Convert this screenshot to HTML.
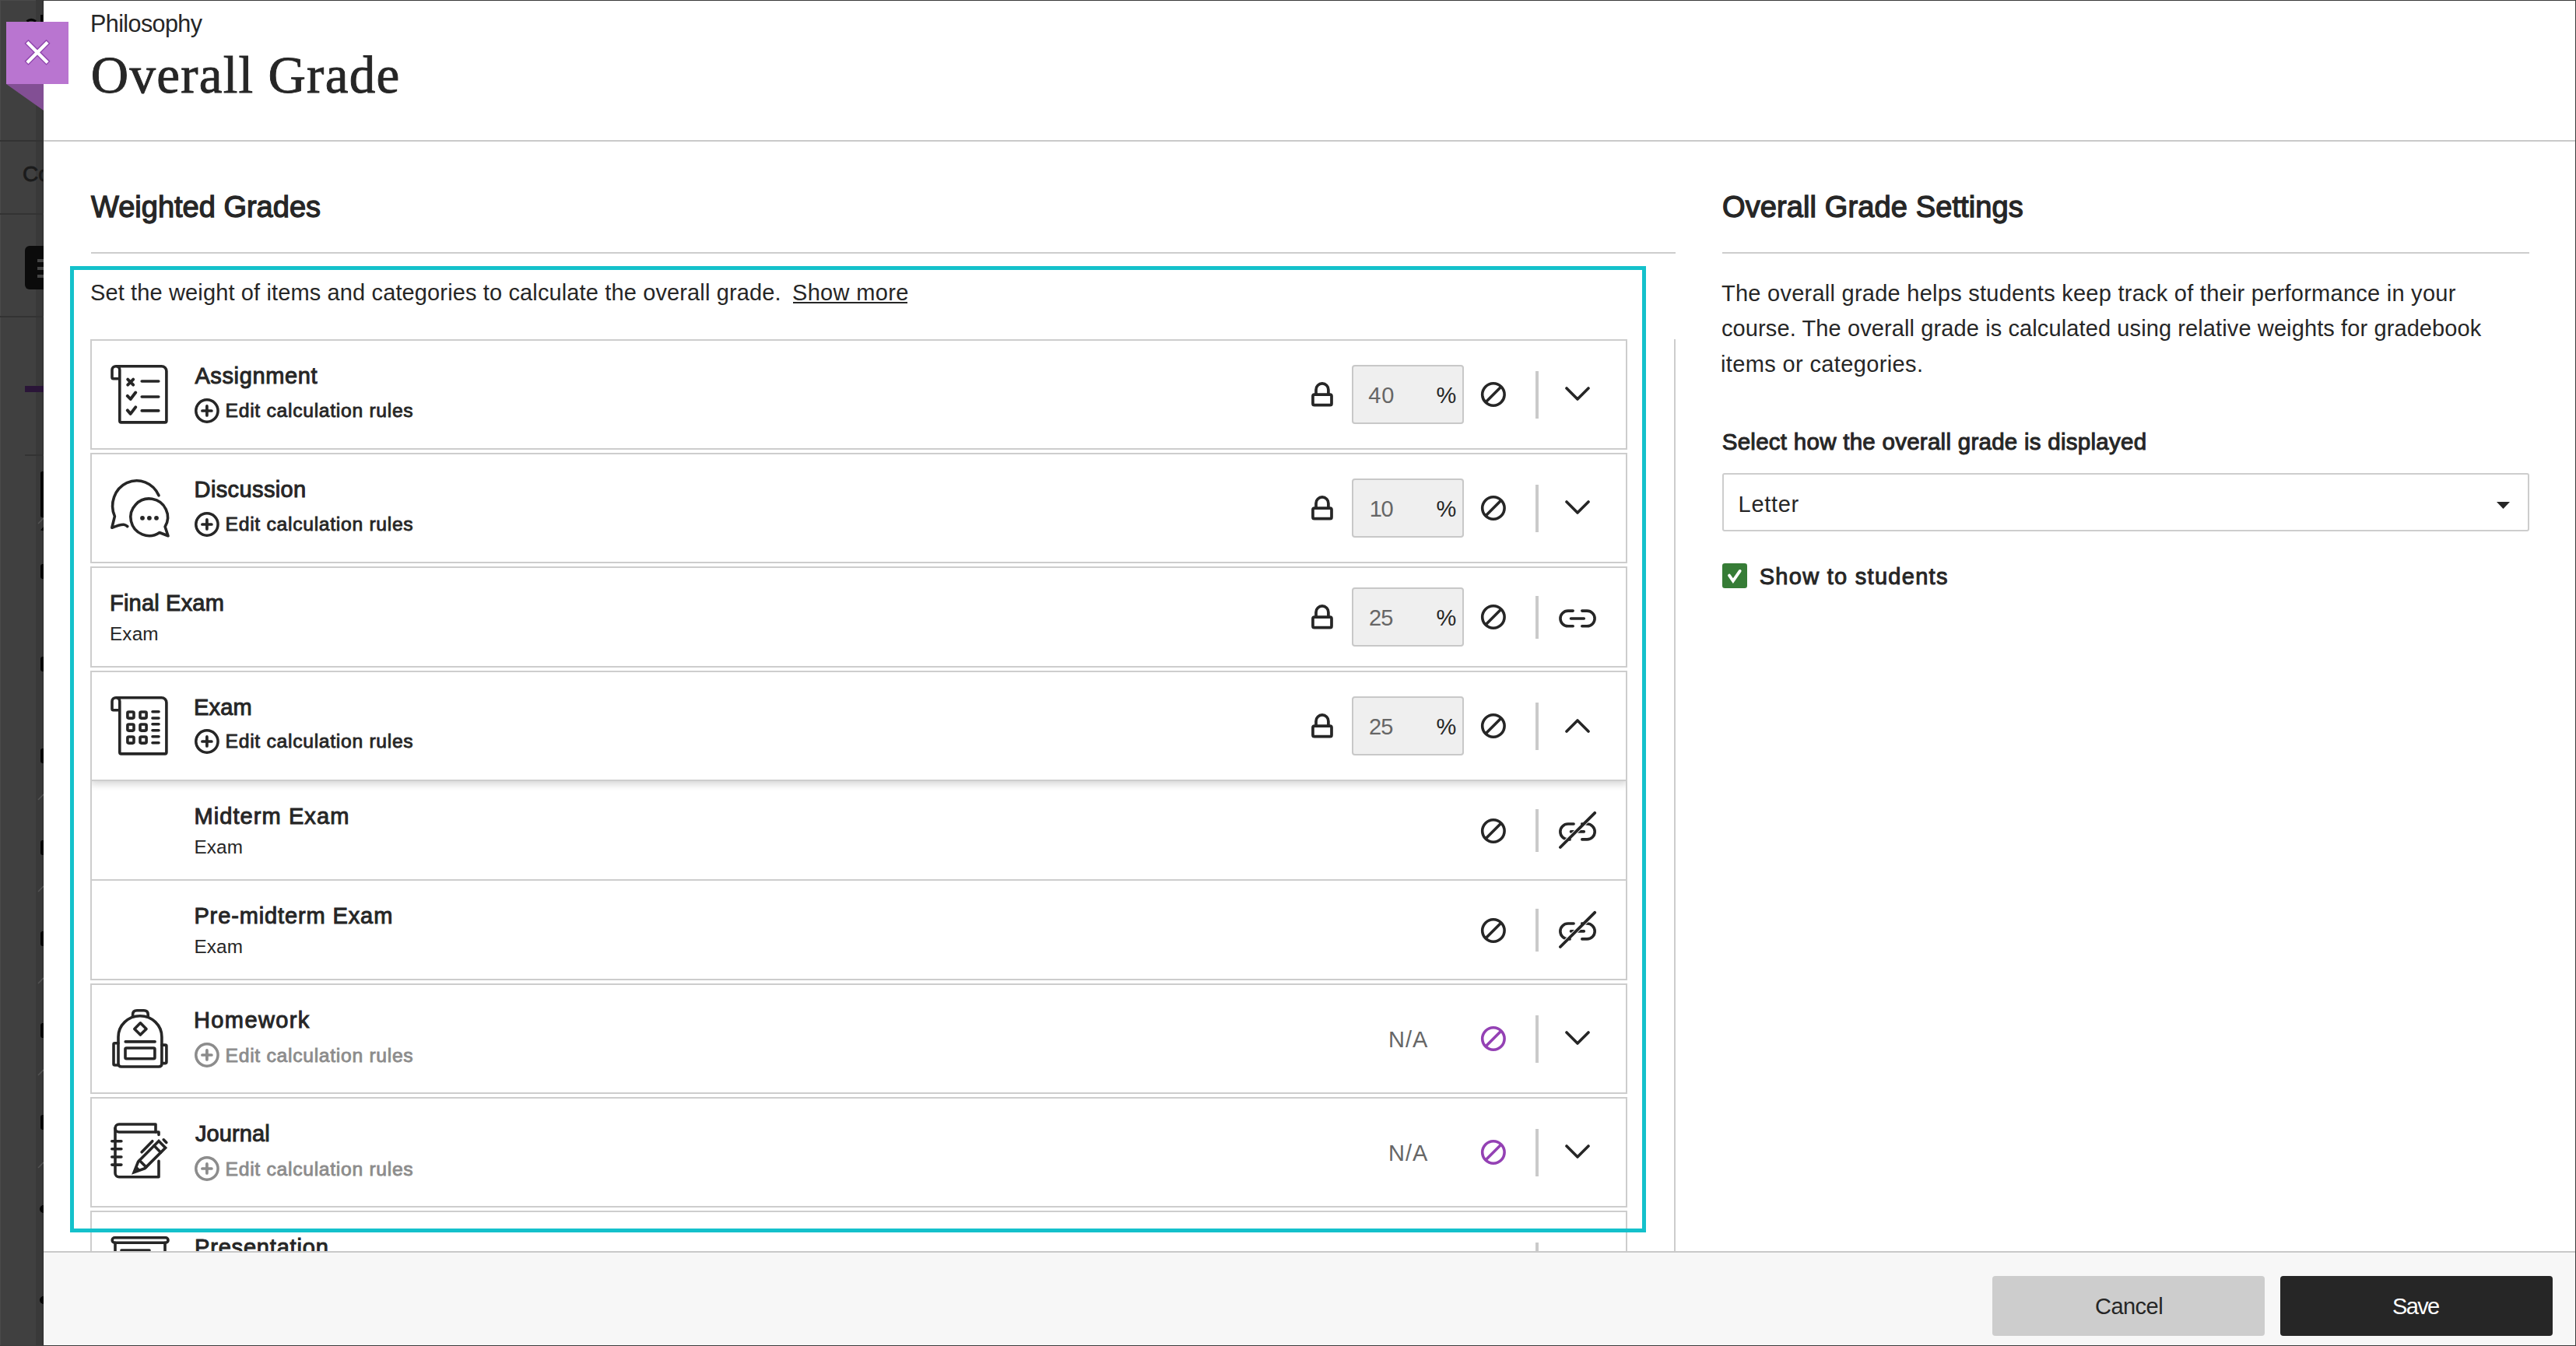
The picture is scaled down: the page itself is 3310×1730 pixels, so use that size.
<!DOCTYPE html>
<html><head><meta charset='utf-8'><title>Overall Grade</title>
<style>html,body{margin:0;padding:0;width:3310px;height:1730px;overflow:hidden;background:#404040;}
body{position:relative;font-family:"Liberation Sans",sans-serif;}</style></head><body>
<div style='position:absolute;left:0px;top:0px;width:56px;height:1730px;background:#404040'></div>
<div style='position:absolute;left:0px;top:0px;width:1px;height:1730px;background:#4a4a4a'></div>
<div style='position:absolute;left:0px;top:0px;width:56px;height:1px;background:#4a4a4a'></div>
<div style='position:absolute;left:46px;top:0px;width:10px;height:1730px;background:#393939'></div>
<div style='position:absolute;left:55px;top:0px;width:1px;height:1730px;background:#2a2a2a'></div>
<div style='position:absolute;left:0px;top:180px;width:56px;height:2px;background:#333'></div>
<div style='position:absolute;left:0px;top:274px;width:56px;height:2px;background:#333'></div>
<div style='position:absolute;left:0px;top:406px;width:56px;height:2px;background:#333'></div>
<div style='position:absolute;left:32px;top:584px;width:24px;height:2px;background:#333'></div>
<div style='position:absolute;left:29px;top:210px;font-family:"Liberation Sans";font-size:28px;line-height:28px;color:#1b1b1b;white-space:nowrap;-webkit-text-stroke:0.8px #1b1b1b'>Co</div>
<div style='position:absolute;left:32px;top:316px;width:40px;height:56px;background:#0b0b0b;border-radius:6px'></div>
<div style='position:absolute;left:48px;top:333px;width:8px;height:4px;background:#444'></div>
<div style='position:absolute;left:48px;top:343px;width:8px;height:4px;background:#444'></div>
<div style='position:absolute;left:48px;top:353px;width:8px;height:4px;background:#444'></div>
<div style='position:absolute;left:32px;top:496px;width:24px;height:8px;background:#2a1538'></div>
<div style='position:absolute;left:52px;top:606px;width:6px;height:59px;background:#050505;border-radius:2px'></div>
<svg style='position:absolute;left:48px;top:660px;' width='8' height='24' viewBox='0 0 8 24'><polygon points='4,21.5 8,17 8,22' fill='#050505'/><path d='M1,13 L8,6' stroke='#555' stroke-width='1.5'/></svg>
<div style='position:absolute;left:52px;top:725px;width:6px;height:19px;background:#050505;border-radius:3px'></div>
<div style='position:absolute;left:52px;top:844px;width:6px;height:19px;background:#050505;border-radius:3px'></div>
<div style='position:absolute;left:52px;top:962px;width:6px;height:19px;background:#050505;border-radius:3px'></div>
<div style='position:absolute;left:52px;top:1080px;width:6px;height:19px;background:#050505;border-radius:3px'></div>
<div style='position:absolute;left:52px;top:1197px;width:6px;height:19px;background:#050505;border-radius:3px'></div>
<div style='position:absolute;left:52px;top:1315px;width:6px;height:19px;background:#050505;border-radius:3px'></div>
<div style='position:absolute;left:52px;top:1433px;width:6px;height:19px;background:#050505;border-radius:3px'></div>
<div style='position:absolute;left:51px;top:1549px;width:10px;height:10px;background:#050505;border-radius:5px'></div>
<div style='position:absolute;left:51px;top:1666px;width:10px;height:10px;background:#050505;border-radius:5px'></div>
<svg style='position:absolute;left:48px;top:1020px;' width='8' height='10' viewBox='0 0 8 10'><path d='M1,8 L8,1' stroke='#555' stroke-width='1.5'/></svg>
<svg style='position:absolute;left:48px;top:1138px;' width='8' height='10' viewBox='0 0 8 10'><path d='M1,8 L8,1' stroke='#555' stroke-width='1.5'/></svg>
<svg style='position:absolute;left:48px;top:1256px;' width='8' height='10' viewBox='0 0 8 10'><path d='M1,8 L8,1' stroke='#555' stroke-width='1.5'/></svg>
<svg style='position:absolute;left:48px;top:1374px;' width='8' height='10' viewBox='0 0 8 10'><path d='M1,8 L8,1' stroke='#555' stroke-width='1.5'/></svg>
<svg style='position:absolute;left:48px;top:1493px;' width='8' height='10' viewBox='0 0 8 10'><path d='M1,8 L8,1' stroke='#555' stroke-width='1.5'/></svg>
<svg style='position:absolute;left:30px;top:14px;' width='26' height='14' viewBox='0 0 26 14'><path d='M4.5,13.5 Q10,9 16,13.5' fill='none' stroke='#050505' stroke-width='3'/><rect x='22' y='5' width='3' height='9' fill='#050505'/></svg>
<div style='position:absolute;left:56px;top:1px;width:3253px;height:1728px;background:#fff'></div>
<div style='position:absolute;left:3309px;top:0px;width:1px;height:1730px;background:#3c3c3c'></div>
<div style='position:absolute;left:56px;top:0px;width:3254px;height:1px;background:#3a3a3a'></div>
<div style='position:absolute;left:0px;top:1729px;width:3310px;height:1px;background:#3c3c3c'></div>
<div style='position:absolute;left:8px;top:28px;width:80px;height:80px;background:#b975d0'></div>
<svg style='position:absolute;left:8px;top:108px;' width='48' height='34' viewBox='0 0 48 34'><polygon points='0,0 48,0 48,34' fill='#824f94'/></svg>
<svg style='position:absolute;left:8px;top:28px;' width='80' height='80' viewBox='0 0 80 80'><g stroke-linecap='butt' fill='none'><path d='M26,25.3 L54,53.3 M54,25.3 L26,53.3' stroke='#8e44ad' stroke-width='7'/><path d='M26.9,26.2 L53.1,52.4 M53.1,26.2 L26.9,52.4' stroke='#fff' stroke-width='4.3'/></g></svg>
<div style='position:absolute;left:56px;top:180px;width:3253px;height:2px;background:#c9c9c9'></div>
<div style='position:absolute;left:117px;top:324px;width:2036px;height:2px;background:#cdcdcd'></div>
<div style='position:absolute;left:2213px;top:324px;width:1037px;height:2px;background:#cdcdcd'></div>
<div style='position:absolute;left:90px;top:342px;width:2025px;height:1242px;box-sizing:border-box;border:5px solid #14c1cb;z-index:5'></div>
<div style='position:absolute;left:1019px;top:388px;width:147px;height:2px;background:#262626'></div>
<div style='position:absolute;left:2151px;top:436px;width:2px;height:1172px;background:#cdcdcd'></div>
<div style='position:absolute;left:116px;top:436px;width:1975px;height:142px;box-sizing:border-box;border:2px solid #cdcdcd;background:#fff'></div>
<svg style='position:absolute;left:136px;top:462px;' width='88' height='88' viewBox='0 0 88 88'><g fill='none' stroke='#262626' stroke-width='3.6' stroke-linecap='round' stroke-linejoin='round'><path d='M17.8,24.7 L9.7,24.7 Q8,24.7 8,23 L8,13.6 A4.9,4.9 0 0 1 17.8,13.6 L17.8,79 Q17.8,80.9 19.7,80.9 L76,80.9 Q77.9,80.9 77.9,79 L77.9,15.1 A6.4,6.4 0 0 0 71.5,8.7 L12.9,8.7'/><path d='M28.2,25.6 L35.2,32.6 M35.2,25.6 L28.2,32.6' stroke-width='3.9'/><path d='M46.2,28 H67.8 M46.2,48 H67.8 M46.2,65.9 H67.8'/><path d='M27.8,46.9 L31.7,51 L38.2,42.5 M27.8,65.4 L31.7,69.9 L38.2,61.4' stroke-width='3.9'/></g></svg>
<svg style='position:absolute;left:248px;top:509.9px;' width='36' height='36' viewBox='0 0 36 36'><g fill='none' stroke='#262626' stroke-width='3.5' stroke-linecap='round'><circle cx='17.9' cy='18' r='14.15'/><path d='M11.9,18 H23.9 M17.9,11.9 V24' stroke-width='3.7'/></g></svg>
<svg style='position:absolute;left:1676px;top:480px;' width='50' height='50' viewBox='0 0 50 50'><g fill='none' stroke='#262626' stroke-width='3.7' stroke-linejoin='round'><rect x='10.95' y='27.1' width='24.05' height='13.6' rx='2'/><path d='M15,27.1 L15,20.9 A7.95,7.95 0 0 1 30.9,20.9 L30.9,27.1'/></g></svg>
<div style='position:absolute;left:1737px;top:469px;width:144px;height:76px;box-sizing:border-box;background:#efefef;border:2px solid #c8c8c8;border-radius:4px'></div>
<svg style='position:absolute;left:1899px;top:487px;' width='40' height='40' viewBox='0 0 40 40'><g fill='none' stroke='#262626' stroke-width='3.6'><circle cx='19.9' cy='20' r='14.2'/><path d='M9.9,30 L29.9,10'/></g></svg>
<div style='position:absolute;left:1973px;top:477px;width:4px;height:61px;background:#cacaca'></div>
<svg style='position:absolute;left:2007px;top:487px;' width='40' height='40' viewBox='0 0 40 40'><path d='M6,12 L20,26 L34,12' fill='none' stroke='#262626' stroke-width='3.6' stroke-linecap='round' stroke-linejoin='round'/></svg>
<div style='position:absolute;left:116px;top:582px;width:1975px;height:142px;box-sizing:border-box;border:2px solid #cdcdcd;background:#fff'></div>
<svg style='position:absolute;left:136px;top:608px;' width='88' height='88' viewBox='0 0 88 88'><g fill='none' stroke='#262626' stroke-width='3.6' stroke-linecap='round' stroke-linejoin='round'><path d='M68,28.8 A31,32.3 0 1 0 11.4,55.6 L7.8,70.3 Q18,66 23,66.2 Q25.5,66.5 27.8,68.6'/><path d='M69,76.5 A23.8,23.8 0 1 1 76.1,69 L80,80.7 Z'/></g><g fill='#262626'><circle cx='47' cy='57.8' r='2.9'/><circle cx='55.9' cy='57.8' r='2.9'/><circle cx='65' cy='57.8' r='2.9'/></g></svg>
<svg style='position:absolute;left:248px;top:655.9px;' width='36' height='36' viewBox='0 0 36 36'><g fill='none' stroke='#262626' stroke-width='3.5' stroke-linecap='round'><circle cx='17.9' cy='18' r='14.15'/><path d='M11.9,18 H23.9 M17.9,11.9 V24' stroke-width='3.7'/></g></svg>
<svg style='position:absolute;left:1676px;top:626px;' width='50' height='50' viewBox='0 0 50 50'><g fill='none' stroke='#262626' stroke-width='3.7' stroke-linejoin='round'><rect x='10.95' y='27.1' width='24.05' height='13.6' rx='2'/><path d='M15,27.1 L15,20.9 A7.95,7.95 0 0 1 30.9,20.9 L30.9,27.1'/></g></svg>
<div style='position:absolute;left:1737px;top:615px;width:144px;height:76px;box-sizing:border-box;background:#efefef;border:2px solid #c8c8c8;border-radius:4px'></div>
<svg style='position:absolute;left:1899px;top:633px;' width='40' height='40' viewBox='0 0 40 40'><g fill='none' stroke='#262626' stroke-width='3.6'><circle cx='19.9' cy='20' r='14.2'/><path d='M9.9,30 L29.9,10'/></g></svg>
<div style='position:absolute;left:1973px;top:623px;width:4px;height:61px;background:#cacaca'></div>
<svg style='position:absolute;left:2007px;top:633px;' width='40' height='40' viewBox='0 0 40 40'><path d='M6,12 L20,26 L34,12' fill='none' stroke='#262626' stroke-width='3.6' stroke-linecap='round' stroke-linejoin='round'/></svg>
<div style='position:absolute;left:116px;top:728px;width:1975px;height:130px;box-sizing:border-box;border:2px solid #cdcdcd;background:#fff'></div>
<svg style='position:absolute;left:1676px;top:766px;' width='50' height='50' viewBox='0 0 50 50'><g fill='none' stroke='#262626' stroke-width='3.7' stroke-linejoin='round'><rect x='10.95' y='27.1' width='24.05' height='13.6' rx='2'/><path d='M15,27.1 L15,20.9 A7.95,7.95 0 0 1 30.9,20.9 L30.9,27.1'/></g></svg>
<div style='position:absolute;left:1737px;top:755px;width:144px;height:76px;box-sizing:border-box;background:#efefef;border:2px solid #c8c8c8;border-radius:4px'></div>
<svg style='position:absolute;left:1899px;top:773px;' width='40' height='40' viewBox='0 0 40 40'><g fill='none' stroke='#262626' stroke-width='3.6'><circle cx='19.9' cy='20' r='14.2'/><path d='M9.9,30 L29.9,10'/></g></svg>
<div style='position:absolute;left:1973px;top:766px;width:4px;height:55px;background:#cacaca'></div>
<svg style='position:absolute;left:1990px;top:770px;' width='70' height='50' viewBox='0 0 70 50'><g fill='none' stroke='#262626' stroke-width='3.6' stroke-linecap='round'><path d='M31.2,15.1 L24.8,15.1 A9.85,9.85 0 0 0 24.8,34.8 L31.2,34.8'/><path d='M42.8,15.1 L49.25,15.1 A9.85,9.85 0 0 1 49.25,34.8 L42.8,34.8'/><path d='M28.5,25 H45.3'/></g></svg>
<div style='position:absolute;left:116px;top:862px;width:1975px;height:398px;box-sizing:border-box;border:2px solid #cdcdcd;background:#fff'></div>
<div style='position:absolute;left:118px;top:1004px;width:1971px;height:254px;background:#fff'></div>
<div style='position:absolute;left:116px;top:862px;width:1975px;height:398px;overflow:hidden'><div style='position:absolute;left:0;top:0;width:1975px;height:142px;box-sizing:border-box;border:2px solid #cdcdcd;background:#fff;box-shadow:0 4px 9px rgba(0,0,0,0.17)'></div><div style='position:absolute;left:0;top:268px;width:1975px;height:2px;background:#cdcdcd'></div><div style='position:absolute;left:0;top:0;width:2px;height:398px;background:#cdcdcd'></div><div style='position:absolute;right:0;top:0;width:2px;height:398px;background:#cdcdcd'></div><div style='position:absolute;left:0;bottom:0;width:1975px;height:2px;background:#cdcdcd'></div></div>
<svg style='position:absolute;left:136px;top:888px;' width='88' height='88' viewBox='0 0 88 88'><g fill='none' stroke='#262626' stroke-width='3.6' stroke-linecap='round' stroke-linejoin='round'><path d='M17.8,24.7 L9.7,24.7 Q8,24.7 8,23 L8,13.6 A4.9,4.9 0 0 1 17.8,13.6 L17.8,79 Q17.8,80.9 19.7,80.9 L76,80.9 Q77.9,80.9 77.9,79 L77.9,15.1 A6.4,6.4 0 0 0 71.5,8.7 L12.9,8.7'/><rect x='27.9' y='27' width='8.1' height='8.1' rx='1.5'/><rect x='27.9' y='43' width='8.1' height='8.1' rx='1.5'/><rect x='27.9' y='59' width='8.1' height='8.1' rx='1.5'/><rect x='44' y='27' width='8.1' height='8.1' rx='1.5'/><rect x='44' y='43' width='8.1' height='8.1' rx='1.5'/><rect x='44' y='59' width='8.1' height='8.1' rx='1.5'/><path d='M60,26.8 H68 M60,35 H68 M60,42.8 H68 M60,50.8 H68 M60,58.8 H68 M60,66.8 H68'/></g></svg>
<svg style='position:absolute;left:248px;top:934.9px;' width='36' height='36' viewBox='0 0 36 36'><g fill='none' stroke='#262626' stroke-width='3.5' stroke-linecap='round'><circle cx='17.9' cy='18' r='14.15'/><path d='M11.9,18 H23.9 M17.9,11.9 V24' stroke-width='3.7'/></g></svg>
<svg style='position:absolute;left:1676px;top:906px;' width='50' height='50' viewBox='0 0 50 50'><g fill='none' stroke='#262626' stroke-width='3.7' stroke-linejoin='round'><rect x='10.95' y='27.1' width='24.05' height='13.6' rx='2'/><path d='M15,27.1 L15,20.9 A7.95,7.95 0 0 1 30.9,20.9 L30.9,27.1'/></g></svg>
<div style='position:absolute;left:1737px;top:895px;width:144px;height:76px;box-sizing:border-box;background:#efefef;border:2px solid #c8c8c8;border-radius:4px'></div>
<svg style='position:absolute;left:1899px;top:913px;' width='40' height='40' viewBox='0 0 40 40'><g fill='none' stroke='#262626' stroke-width='3.6'><circle cx='19.9' cy='20' r='14.2'/><path d='M9.9,30 L29.9,10'/></g></svg>
<div style='position:absolute;left:1973px;top:903px;width:4px;height:61px;background:#cacaca'></div>
<svg style='position:absolute;left:2007px;top:913px;' width='40' height='40' viewBox='0 0 40 40'><path d='M6,27 L20,13 L34,27' fill='none' stroke='#262626' stroke-width='3.6' stroke-linecap='round' stroke-linejoin='round'/></svg>
<svg style='position:absolute;left:1899px;top:1048px;' width='40' height='40' viewBox='0 0 40 40'><g fill='none' stroke='#262626' stroke-width='3.6'><circle cx='19.9' cy='20' r='14.2'/><path d='M9.9,30 L29.9,10'/></g></svg>
<div style='position:absolute;left:1973px;top:1040px;width:4px;height:55px;background:#cacaca'></div>
<svg style='position:absolute;left:1990px;top:1035px;' width='70' height='68' viewBox='0 0 70 68'><g fill='none' stroke-linecap='round'><g stroke='#262626' stroke-width='3.6'><path d='M32.1,24 L24.8,24 A9.95,9.95 0 0 0 24.8,43.9 L27,43.9'/><path d='M42.8,24 L49.25,24 A9.95,9.95 0 0 1 49.25,43.9 L42.8,43.9'/><path d='M28.5,33.9 H45.3'/></g><path d='M14.9,54 L59.2,9.8' stroke='#fff' stroke-width='5.6'/><path d='M42.8,24 L43.6,24 M26.2,43.9 L27,43.9' stroke='#262626' stroke-width='3.6'/><path d='M14.9,54 L59.2,9.8' stroke='#262626' stroke-width='3.8'/></g></svg>
<svg style='position:absolute;left:1899px;top:1176px;' width='40' height='40' viewBox='0 0 40 40'><g fill='none' stroke='#262626' stroke-width='3.6'><circle cx='19.9' cy='20' r='14.2'/><path d='M9.9,30 L29.9,10'/></g></svg>
<div style='position:absolute;left:1973px;top:1168px;width:4px;height:55px;background:#cacaca'></div>
<svg style='position:absolute;left:1990px;top:1163px;' width='70' height='68' viewBox='0 0 70 68'><g fill='none' stroke-linecap='round'><g stroke='#262626' stroke-width='3.6'><path d='M32.1,24 L24.8,24 A9.95,9.95 0 0 0 24.8,43.9 L27,43.9'/><path d='M42.8,24 L49.25,24 A9.95,9.95 0 0 1 49.25,43.9 L42.8,43.9'/><path d='M28.5,33.9 H45.3'/></g><path d='M14.9,54 L59.2,9.8' stroke='#fff' stroke-width='5.6'/><path d='M42.8,24 L43.6,24 M26.2,43.9 L27,43.9' stroke='#262626' stroke-width='3.6'/><path d='M14.9,54 L59.2,9.8' stroke='#262626' stroke-width='3.8'/></g></svg>
<div style='position:absolute;left:116px;top:1264px;width:1975px;height:142px;box-sizing:border-box;border:2px solid #cdcdcd;background:#fff'></div>
<svg style='position:absolute;left:136px;top:1290px;' width='88' height='88' viewBox='0 0 88 88'><g fill='none' stroke='#262626' stroke-width='3.6' stroke-linecap='round' stroke-linejoin='round'><path d='M16,42.8 A27.95,27.1 0 0 1 71.9,42.8 L71.9,77 Q71.9,81 67.9,81 L20,81 Q16,81 16,77 Z'/><path d='M34.6,16.5 L34.6,14 Q34.6,8.8 40,8.8 L48.8,8.8 Q54.2,8.8 54.2,14 L54.2,16.5'/><path d='M44.4,24.8 L52,32.4 L44.4,40 L36.8,32.4 Z'/><path d='M25.2,48.9 H63.1'/><rect x='25' y='57' width='37.9' height='13.7' rx='1.5'/><path d='M16,50.8 L11.5,50.8 Q10,50.8 10,52.3 L10,77.5 Q10,79 11.5,79 L16,79'/><path d='M71.9,53.1 L76.4,53.1 Q77.9,53.1 77.9,54.6 L77.9,75.1 Q77.9,76.6 76.4,76.6 L71.9,76.6'/></g></svg>
<svg style='position:absolute;left:248px;top:1337.9px;' width='36' height='36' viewBox='0 0 36 36'><g fill='none' stroke='#8c8c8c' stroke-width='3.5' stroke-linecap='round'><circle cx='17.9' cy='18' r='14.15'/><path d='M11.9,18 H23.9 M17.9,11.9 V24' stroke-width='3.7'/></g></svg>
<svg style='position:absolute;left:1899px;top:1315px;' width='40' height='40' viewBox='0 0 40 40'><g fill='none' stroke='#9441b4' stroke-width='3.6'><circle cx='19.9' cy='20' r='14.2'/><path d='M9.9,30 L29.9,10'/></g></svg>
<div style='position:absolute;left:1973px;top:1305px;width:4px;height:61px;background:#cacaca'></div>
<svg style='position:absolute;left:2007px;top:1315px;' width='40' height='40' viewBox='0 0 40 40'><path d='M6,12 L20,26 L34,12' fill='none' stroke='#262626' stroke-width='3.6' stroke-linecap='round' stroke-linejoin='round'/></svg>
<div style='position:absolute;left:116px;top:1410px;width:1975px;height:142px;box-sizing:border-box;border:2px solid #cdcdcd;background:#fff'></div>
<svg style='position:absolute;left:136px;top:1436px;' width='88' height='88' viewBox='0 0 88 88'><g fill='none' stroke='#262626' stroke-width='3.6' stroke-linecap='round' stroke-linejoin='round'><path d='M68,56.2 L68,76.8 L17,76.8 A5,5 0 0 1 12,71.8 L12,14 A5,5 0 0 1 17,9 L64,9 L64,19'/><path d='M68,22.5 L68,19 L17,19 A5,5 0 0 1 12,14'/><path d='M7.8,30.7 H19.9 M7.8,40.8 H19.9 M7.8,51 H19.9 M7.8,61.1 H19.9'/><path d='M36.2,70.6 L41.6,57 L68,30.6 L76.6,39.2 L50.2,65.6 Z' stroke-linejoin='miter'/><path d='M62,36.6 L70.6,45.2 M43.2,55.4 L51.8,64'/><path d='M46.1,44.8 L59.8,30.7 M74.2,28.8 L77.8,32.4'/></g><path d='M36.5,70.3 L39.5,62.5 L44.5,67.5 Z' fill='#262626'/></svg>
<svg style='position:absolute;left:248px;top:1483.9px;' width='36' height='36' viewBox='0 0 36 36'><g fill='none' stroke='#8c8c8c' stroke-width='3.5' stroke-linecap='round'><circle cx='17.9' cy='18' r='14.15'/><path d='M11.9,18 H23.9 M17.9,11.9 V24' stroke-width='3.7'/></g></svg>
<svg style='position:absolute;left:1899px;top:1461px;' width='40' height='40' viewBox='0 0 40 40'><g fill='none' stroke='#9441b4' stroke-width='3.6'><circle cx='19.9' cy='20' r='14.2'/><path d='M9.9,30 L29.9,10'/></g></svg>
<div style='position:absolute;left:1973px;top:1451px;width:4px;height:61px;background:#cacaca'></div>
<svg style='position:absolute;left:2007px;top:1461px;' width='40' height='40' viewBox='0 0 40 40'><path d='M6,12 L20,26 L34,12' fill='none' stroke='#262626' stroke-width='3.6' stroke-linecap='round' stroke-linejoin='round'/></svg>
<div style='position:absolute;left:116px;top:1556px;width:1975px;height:142px;box-sizing:border-box;border:2px solid #cdcdcd;background:#fff'></div>
<svg style='position:absolute;left:136px;top:1582px;' width='88' height='88' viewBox='0 0 88 88'><g fill='none' stroke='#262626' stroke-width='3.6' stroke-linecap='round' stroke-linejoin='round'><rect x='8.2' y='8.8' width='71.8' height='6.4' rx='3.2'/><path d='M12,15.2 V40 M76,15.2 V40 M20,25 H56'/></g></svg>
<div style='position:absolute;left:1973px;top:1597px;width:4px;height:61px;background:#cacaca'></div>
<div style='position:absolute;left:2213px;top:608px;width:1037px;height:75px;box-sizing:border-box;border:2px solid #cdcdcd;border-radius:3px;background:#fff'></div>
<svg style='position:absolute;left:3200px;top:640px;' width='32' height='20' viewBox='0 0 32 20'><polygon points='8,5 25,5 16.5,14' fill='#262626'/></svg>
<svg style='position:absolute;left:2213px;top:724px;' width='32' height='32' viewBox='0 0 32 32'><rect x='0' y='0' width='32' height='32' rx='3.3' fill='#367c36'/><path d='M9,15.6 L13.9,22.6 L22.7,9.9' fill='none' stroke='#fff' stroke-width='3.8' stroke-linecap='round' stroke-linejoin='miter'/></svg>
<div style='position:absolute;left:116.00px;top:14.50px;font-family:"Liberation Sans";font-weight:400;font-size:30.5px;line-height:30.5px;letter-spacing:-0.589px;color:#262626;white-space:nowrap;'>Philosophy</div>
<div style='position:absolute;left:116.80px;top:63.00px;font-family:"Liberation Serif";font-weight:400;font-size:67px;line-height:67px;letter-spacing:1.250px;color:#262626;white-space:nowrap;-webkit-text-stroke:0.9px #262626;'>Overall Grade</div>
<div style='position:absolute;left:117.00px;top:247.00px;font-family:"Liberation Sans";font-weight:400;font-size:38px;line-height:38px;letter-spacing:0.000px;color:#262626;white-space:nowrap;-webkit-text-stroke:1.31px #262626;'>Weighted Grades</div>
<div style='position:absolute;left:2213.00px;top:246.50px;font-family:"Liberation Sans";font-weight:400;font-size:38px;line-height:38px;letter-spacing:0.114px;color:#262626;white-space:nowrap;-webkit-text-stroke:1.31px #262626;'>Overall Grade Settings</div>
<div style='position:absolute;left:116.00px;top:361.60px;font-family:"Liberation Sans";font-weight:400;font-size:29px;line-height:29px;letter-spacing:0.130px;color:#262626;white-space:nowrap;'>Set the weight of items and categories to calculate the overall grade.</div>
<div style='position:absolute;left:1018.00px;top:361.60px;font-family:"Liberation Sans";font-weight:400;font-size:29px;line-height:29px;letter-spacing:0.325px;color:#262626;white-space:nowrap;'>Show more</div>
<div style='position:absolute;left:250.40px;top:469.00px;font-family:"Liberation Sans";font-weight:400;font-size:29px;line-height:29px;letter-spacing:0.622px;color:#262626;white-space:nowrap;-webkit-text-stroke:1.00px #262626;'>Assignment</div>
<div style='position:absolute;left:289.60px;top:516.00px;font-family:"Liberation Sans";font-weight:400;font-size:24.7px;line-height:24.7px;letter-spacing:0.700px;color:#262626;white-space:nowrap;-webkit-text-stroke:0.85px #262626;'>Edit calculation rules</div>
<div style='position:absolute;left:1758.30px;top:494.00px;font-family:"Liberation Sans";font-weight:400;font-size:29px;line-height:29px;letter-spacing:0.700px;color:#666;white-space:nowrap;'>40</div>
<div style='position:absolute;left:1845.40px;top:494.00px;font-family:"Liberation Sans";font-weight:400;font-size:29px;line-height:29px;letter-spacing:0.000px;color:#262626;white-space:nowrap;'>%</div>
<div style='position:absolute;left:249.60px;top:615.00px;font-family:"Liberation Sans";font-weight:400;font-size:29px;line-height:29px;letter-spacing:0.378px;color:#262626;white-space:nowrap;-webkit-text-stroke:1.00px #262626;'>Discussion</div>
<div style='position:absolute;left:289.60px;top:662.00px;font-family:"Liberation Sans";font-weight:400;font-size:24.7px;line-height:24.7px;letter-spacing:0.700px;color:#262626;white-space:nowrap;-webkit-text-stroke:0.85px #262626;'>Edit calculation rules</div>
<div style='position:absolute;left:1759.70px;top:640.00px;font-family:"Liberation Sans";font-weight:400;font-size:29px;line-height:29px;letter-spacing:-1.200px;color:#666;white-space:nowrap;'>10</div>
<div style='position:absolute;left:1845.40px;top:640.00px;font-family:"Liberation Sans";font-weight:400;font-size:29px;line-height:29px;letter-spacing:0.000px;color:#262626;white-space:nowrap;'>%</div>
<div style='position:absolute;left:141.00px;top:761.00px;font-family:"Liberation Sans";font-weight:400;font-size:29px;line-height:29px;letter-spacing:0.200px;color:#262626;white-space:nowrap;-webkit-text-stroke:1.00px #262626;'>Final Exam</div>
<div style='position:absolute;left:141.00px;top:803.00px;font-family:"Liberation Sans";font-weight:400;font-size:24.3px;line-height:24.3px;letter-spacing:0.167px;color:#262626;white-space:nowrap;'>Exam</div>
<div style='position:absolute;left:1759.10px;top:780.00px;font-family:"Liberation Sans";font-weight:400;font-size:29px;line-height:29px;letter-spacing:-0.900px;color:#666;white-space:nowrap;'>25</div>
<div style='position:absolute;left:1845.40px;top:780.00px;font-family:"Liberation Sans";font-weight:400;font-size:29px;line-height:29px;letter-spacing:0.000px;color:#262626;white-space:nowrap;'>%</div>
<div style='position:absolute;left:249.00px;top:895.00px;font-family:"Liberation Sans";font-weight:400;font-size:29px;line-height:29px;letter-spacing:0.167px;color:#262626;white-space:nowrap;-webkit-text-stroke:1.00px #262626;'>Exam</div>
<div style='position:absolute;left:289.60px;top:941.00px;font-family:"Liberation Sans";font-weight:400;font-size:24.7px;line-height:24.7px;letter-spacing:0.700px;color:#262626;white-space:nowrap;-webkit-text-stroke:0.85px #262626;'>Edit calculation rules</div>
<div style='position:absolute;left:1759.10px;top:920.00px;font-family:"Liberation Sans";font-weight:400;font-size:29px;line-height:29px;letter-spacing:-0.900px;color:#666;white-space:nowrap;'>25</div>
<div style='position:absolute;left:1845.40px;top:920.00px;font-family:"Liberation Sans";font-weight:400;font-size:29px;line-height:29px;letter-spacing:0.000px;color:#262626;white-space:nowrap;'>%</div>
<div style='position:absolute;left:249.40px;top:1035.00px;font-family:"Liberation Sans";font-weight:400;font-size:29px;line-height:29px;letter-spacing:1.091px;color:#262626;white-space:nowrap;-webkit-text-stroke:1.00px #262626;'>Midterm Exam</div>
<div style='position:absolute;left:249.40px;top:1076.60px;font-family:"Liberation Sans";font-weight:400;font-size:24.3px;line-height:24.3px;letter-spacing:0.167px;color:#262626;white-space:nowrap;'>Exam</div>
<div style='position:absolute;left:249.40px;top:1163.00px;font-family:"Liberation Sans";font-weight:400;font-size:29px;line-height:29px;letter-spacing:0.880px;color:#262626;white-space:nowrap;-webkit-text-stroke:1.00px #262626;'>Pre-midterm Exam</div>
<div style='position:absolute;left:249.40px;top:1205.00px;font-family:"Liberation Sans";font-weight:400;font-size:24.3px;line-height:24.3px;letter-spacing:0.167px;color:#262626;white-space:nowrap;'>Exam</div>
<div style='position:absolute;left:249.00px;top:1297.00px;font-family:"Liberation Sans";font-weight:400;font-size:29px;line-height:29px;letter-spacing:1.386px;color:#262626;white-space:nowrap;-webkit-text-stroke:1.00px #262626;'>Homework</div>
<div style='position:absolute;left:289.60px;top:1345.00px;font-family:"Liberation Sans";font-weight:400;font-size:24.7px;line-height:24.7px;letter-spacing:0.700px;color:#8c8c8c;white-space:nowrap;-webkit-text-stroke:0.85px #8c8c8c;'>Edit calculation rules</div>
<div style='position:absolute;left:1784.00px;top:1322.00px;font-family:"Liberation Sans";font-weight:400;font-size:29px;line-height:29px;letter-spacing:0.950px;color:#666;white-space:nowrap;'>N/A</div>
<div style='position:absolute;left:251.00px;top:1443.00px;font-family:"Liberation Sans";font-weight:400;font-size:29px;line-height:29px;letter-spacing:0.083px;color:#262626;white-space:nowrap;-webkit-text-stroke:1.00px #262626;'>Journal</div>
<div style='position:absolute;left:289.60px;top:1491.00px;font-family:"Liberation Sans";font-weight:400;font-size:24.7px;line-height:24.7px;letter-spacing:0.700px;color:#8c8c8c;white-space:nowrap;-webkit-text-stroke:0.85px #8c8c8c;'>Edit calculation rules</div>
<div style='position:absolute;left:1784.00px;top:1468.00px;font-family:"Liberation Sans";font-weight:400;font-size:29px;line-height:29px;letter-spacing:0.950px;color:#666;white-space:nowrap;'>N/A</div>
<div style='position:absolute;left:250.00px;top:1589.00px;font-family:"Liberation Sans";font-weight:400;font-size:29px;line-height:29px;letter-spacing:0.818px;color:#262626;white-space:nowrap;-webkit-text-stroke:1.00px #262626;'>Presentation</div>
<div style='position:absolute;left:2212.00px;top:363.30px;font-family:"Liberation Sans";font-weight:400;font-size:29px;line-height:29px;letter-spacing:0.254px;color:#262626;white-space:nowrap;'>The overall grade helps students keep track of their performance in your</div>
<div style='position:absolute;left:2212.00px;top:408.40px;font-family:"Liberation Sans";font-weight:400;font-size:29px;line-height:29px;letter-spacing:0.107px;color:#262626;white-space:nowrap;'>course. The overall grade is calculated using relative weights for gradebook</div>
<div style='position:absolute;left:2211.00px;top:453.50px;font-family:"Liberation Sans";font-weight:400;font-size:29px;line-height:29px;letter-spacing:0.368px;color:#262626;white-space:nowrap;'>items or categories.</div>
<div style='position:absolute;left:2212.70px;top:553.00px;font-family:"Liberation Sans";font-weight:400;font-size:29.5px;line-height:29.5px;letter-spacing:0.272px;color:#262626;white-space:nowrap;-webkit-text-stroke:1.02px #262626;'>Select how the overall grade is displayed</div>
<div style='position:absolute;left:2233.60px;top:634.30px;font-family:"Liberation Sans";font-weight:400;font-size:29px;line-height:29px;letter-spacing:0.680px;color:#262626;white-space:nowrap;'>Letter</div>
<div style='position:absolute;left:2260.70px;top:726.60px;font-family:"Liberation Sans";font-weight:400;font-size:29px;line-height:29px;letter-spacing:1.287px;color:#262626;white-space:nowrap;-webkit-text-stroke:1.00px #262626;'>Show to students</div>
<div style='position:absolute;left:56px;top:1608px;width:3253px;height:121px;background:#f7f7f7'></div>
<div style='position:absolute;left:56px;top:1608px;width:3253px;height:2px;background:#c9c9c9'></div>
<div style='position:absolute;left:2560px;top:1640px;width:350px;height:77px;background:#cdcdcd;border-radius:4px'></div>
<div style='position:absolute;left:2930px;top:1640px;width:350px;height:77px;background:#262626;border-radius:4px'></div>
<div style='position:absolute;left:2692.00px;top:1665.00px;font-family:"Liberation Sans";font-weight:400;font-size:29px;line-height:29px;letter-spacing:-0.540px;color:#262626;white-space:nowrap;'>Cancel</div>
<div style='position:absolute;left:3074.00px;top:1665.00px;font-family:"Liberation Sans";font-weight:400;font-size:29px;line-height:29px;letter-spacing:-1.667px;color:#fff;white-space:nowrap;'>Save</div>
</body></html>
